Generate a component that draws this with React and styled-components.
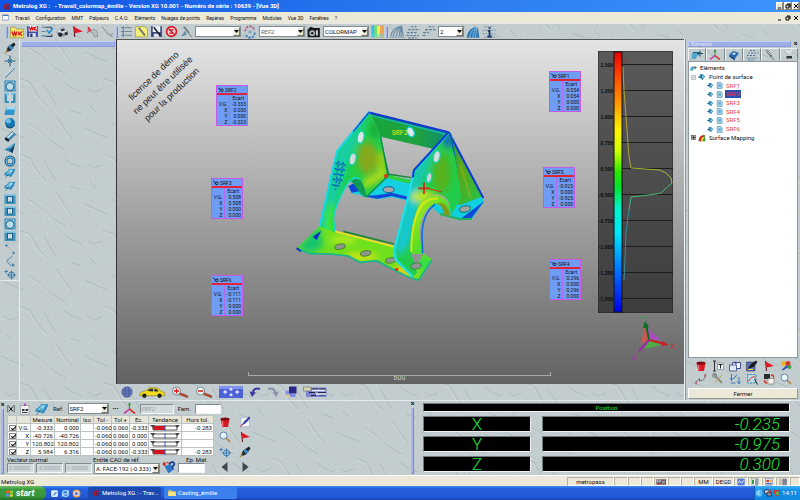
import styled, { createGlobalStyle } from 'styled-components';

const GlobalStyle = createGlobalStyle`
  * {
    box-sizing: border-box;
  }
  body {
    margin: 0;
    background: #c0cacc;
    color: #111;
    font-family: 'Roboto', sans-serif;
    font-size: 6px;
    line-height: 8px;
  }
  button, input, select {
    font: inherit;
    color: inherit;
    margin: 0;
    padding: 0;
  }
`;

/* ---------- icons ---------- */

const glyphs = {
  app: (
    <>
      <path d='M20 5 Q10 1 6 9 Q3 17 10 22 L13 17 Q9 12 14 9 L20 10Z' fill='#b5121f' />
      <path d='M12 12 L21 12 L19 20 L13 20Z' fill='#7a1d38' />
    </>
  ),
  doc: (
    <>
      <rect x='1' y='3' width='22' height='18' rx='2' fill='#fff' stroke='#3b66c8' strokeWidth='2' />
      <path d='M2 5H22' stroke='#3b66c8' strokeWidth='3' />
    </>
  ),
  wkOpen: (
    <>
      <path d='M1 4H9L11 7H23V22H1Z' fill='#f5e56b' stroke='#9b8a20' />
      <path d='M3 11L6 18L8 12L10 18L12 11M15 11V18M21 11L16 15L21 18' fill='none' stroke='#e01010' strokeWidth='2' />
    </>
  ),
  wkSave: (
    <>
      <path d='M2 2H22V22H2Z' fill='#3b4ea8' />
      <rect x='5' y='1' width='15' height='11' fill='#fff' />
      <path d='M6 3L8 10L10 4L12 10L13 3M15 3V10M19 3L15 7L20 10' fill='none' stroke='#e01010' strokeWidth='2' />
      <rect x='6' y='15' width='12' height='7' fill='#dfe4f4' />
      <rect x='8' y='16' width='4' height='6' fill='#20285c' />
    </>
  ),
  tasks: (
    <>
      <path d='M1 4H9M1 12H9M1 20H9' stroke='#5a84a8' strokeWidth='2' />
      <path d='M9 4H19V8M20 17V21H9' fill='none' stroke='#344a66' strokeWidth='2' />
      <path d='M11 9L15 15L22 6' fill='none' stroke='#2a8ccb' strokeWidth='3' />
    </>
  ),
  machine: (
    <>
      <path d='M2 12L12 3L22 11L15 20L3 17Z' fill='#dfe5ea' stroke='#7b8790' />
      <path d='M2 12L12 15L22 11V16L14 21L3 18Z' fill='#8796a6' />
      <circle cx='8' cy='18' r='4' fill='#23282e' />
      <circle cx='19' cy='16' r='3' fill='#333' />
      <path d='M8 8L14 6L17 10L10 12Z' fill='#343b47' />
    </>
  ),
  flag: (
    <>
      <path d='M5 2L7 22' stroke='#5a1018' strokeWidth='2' />
      <path d='M5 3L22 12L7 15Z' fill='#e31826' />
    </>
  ),
  spray: (
    <>
      <path d='M4 4L9 12' stroke='#e02020' strokeWidth='3' />
      <path d='M8 12Q14 5 20 11L22 21L16 22L13 16Z' fill='#b9bec3' stroke='#6d747a' />
      <path d='M2 14L6 11M3 9L8 8' stroke='#c34' strokeWidth='2' />
    </>
  ),
  probe: (
    <>
      <path d='M3 2L15 17' stroke='#7d8790' strokeWidth='4' />
      <path d='M4 2L15 16' stroke='#dfe5e8' strokeWidth='2' />
      <path d='M15 17L22 22M17 22L22 15' stroke='#666' strokeWidth='1' />
    </>
  ),
  list: (
    <>
      <path d='M8 5H22M8 12H22M8 19H22' stroke='#75848c' strokeWidth='2' />
      <path d='M2 5H5M2 12H5M2 19H5M6 2V22' stroke='#4d80b0' strokeWidth='2' />
    </>
  ),
  note: (
    <>
      <path d='M1 3H19L23 8V22H1Z' fill='#f4ec7c' stroke='#8c8434' />
      <path d='M7 5L18 19' stroke='#2d3138' strokeWidth='3' />
      <path d='M7 5L17 18' stroke='#fff' strokeWidth='1' />
    </>
  ),
  saveNote: (
    <>
      <path d='M2 2H22V22H2Z' fill='#39487c' />
      <path d='M5 2H19V13H5Z' fill='#eef1f8' />
      <rect x='7' y='16' width='10' height='6' fill='#dfe4f4' />
      <path d='M7 4L19 20' stroke='#20242a' strokeWidth='3' />
    </>
  ),
  forbid: (
    <>
      <circle cx='12' cy='12' r='9' fill='#ecd0d2' stroke='#d81220' strokeWidth='3' />
      <path d='M6 6L18 18M8 9H16M8 15H16' stroke='#c4111d' strokeWidth='2' />
    </>
  ),
  pick: (
    <>
      <path d='M7 3L17 15' stroke='#7b858d' strokeWidth='4' />
      <path d='M2 21L10 10L12 18Z' fill='#5d8cab' />
      <path d='M16 16L22 22' stroke='#333' />
    </>
  ),
  rotate: (
    <>
      <path d='M4 11A8 8 0 0 1 17 4L20 9' fill='none' stroke='#b8557a' strokeWidth='3' strokeDasharray='4 2' />
      <path d='M20 13A8 8 0 0 1 7 20L4 15' fill='none' stroke='#377abb' strokeWidth='3' strokeDasharray='4 2' />
      <circle cx='12' cy='12' r='3' fill='#7ea6c2' />
    </>
  ),
  camera: (
    <>
      <path d='M1 8L6 3L12 5L22 5V21H1Z' fill='#16181b' />
      <circle cx='9' cy='14' r='5' fill='#aeb6bc' />
      <circle cx='9' cy='14' r='2' fill='#111' />
      <path d='M17 9V18' stroke='#e5e8ea' strokeWidth='3' />
    </>
  ),
  spectrum: (
    <>
      <rect x='1' y='1' width='6' height='22' fill='#38b8ec' />
      <rect x='6' y='1' width='6' height='22' fill='#6fe06b' />
      <rect x='11' y='1' width='6' height='22' fill='#f4ee56' />
      <rect x='17' y='1' width='6' height='22' fill='#f4a04c' />
      <path d='M1 16H23V23H1Z' fill='#5ee0d0' opacity='0.5' />
      <rect x='1' y='1' width='22' height='22' fill='none' stroke='#9fb2b8' />
    </>
  ),
  fan: (
    <path
      d='M1 22Q2 5 20 2L23 22M5 22Q6 9 20 2M10 22Q12 9 20 2M15 22Q16 10 20 2M19 22V3'
      fill='none'
      stroke='#6b8da5'
      strokeWidth='2'
    />
  ),
  fanBlue: (
    <>
      <path d='M1 22Q2 5 20 2L23 22Z' fill='#2f78b4' />
      <path d='M6 22Q7 9 20 2M11 22Q13 9 20 2M16 22Q17 10 20 2' fill='none' stroke='#b9dcf1' strokeWidth='1' />
    </>
  ),
  cloud: (
    <path
      d='M8 3H20M4 8H23M2 13H20M1 18H22M4 22H18'
      stroke='#577a94'
      strokeWidth='2'
      strokeDasharray='4 2'
    />
  ),
  cloudHalf: <path d='M11 3H21M5 8H23M2 13H12M1 18H7' stroke='#577a94' strokeWidth='2' strokeDasharray='5 2' />,
  cloudInfo: (
    <>
      <path d='M4 3H20M1 9H23M1 15H23M4 21H22' stroke='#6f8ca0' strokeWidth='2' strokeDasharray='3 2' />
      <path d='M13 4V7M10 10H13V20M9 20H17' stroke='#16356e' strokeWidth='3' fill='none' />
    </>
  ),
  pen: (
    <>
      <path d='M3 21L8 9L20 1L23 5L14 17Z' fill='#1d2328' />
      <path d='M8 9L14 16L20 12L13 6Z' fill='#3b8bc4' />
      <path d='M2 23L8 15' stroke='#c98a2c' strokeWidth='2' />
    </>
  ),
  point: (
    <>
      <path d='M12 1V23M1 12H23' stroke='#25587a' strokeWidth='2' />
      <path d='M8 8L16 16M16 8L8 16' stroke='#1e6ea0' strokeWidth='2' />
    </>
  ),
  line: <path d='M2 22L22 2' stroke='#3a83ad' strokeWidth='2' />,
  circle: (
    <>
      <rect x='1' y='1' width='22' height='22' fill='#2f83b4' />
      <rect x='3' y='3' width='18' height='18' fill='#8cc8e4' />
      <circle cx='12' cy='13' r='8' fill='#bcdce6' stroke='#1b5d86' strokeWidth='2' />
    </>
  ),
  slot: (
    <>
      <path d='M1 2H23V22H1Z' fill='#3b8fbc' />
      <path d='M1 2H23L18 7H6Z' fill='#7fc2de' />
      <path d='M6 6H18V18H6Z' fill='#c3d3d8' />
      <path d='M10 1H14V6H10ZM10 18H14V23H10Z' fill='#c3d3d8' />
    </>
  ),
  door: (
    <>
      <rect x='1' y='2' width='22' height='20' fill='#3f94bf' />
      <rect x='1' y='2' width='22' height='4' fill='#86c6e0' />
      <path d='M7 6Q12 9 17 6V19Q12 16 7 19Z' fill='#cfe0e5' stroke='#1d5f85' strokeWidth='2' />
    </>
  ),
  plane: (
    <>
      <path d='M4 4H23L20 20H1Z' fill='#2f95cc' />
      <path d='M5 4H23L22 9H4Z' fill='#a4dcf3' />
    </>
  ),
  sphere: (
    <>
      <circle cx='12' cy='12' r='10' fill='#1577b3' />
      <circle cx='9' cy='8' r='5' fill='#66bfe9' />
      <path d='M4 18A10 10 0 0 0 21 16' stroke='#0b3a5d' strokeWidth='2' fill='none' />
    </>
  ),
  cylinder: (
    <>
      <path d='M2 17L17 3L23 9L9 22Z' fill='#3a92c0' stroke='#1b3344' />
      <path d='M4 16L17 4L20 6L6 19Z' fill='#c8ecf8' />
      <ellipse cx='6' cy='19' rx='5' ry='3' transform='rotate(42 6 19)' fill='#15222c' />
    </>
  ),
  cone: (
    <>
      <path d='M1 15L22 2L17 22Z' fill='#2379a9' />
      <path d='M1 15L22 2L19 10Z' fill='#5cbbe4' />
      <path d='M22 2L17 22L12 18Z' fill='#123a55' />
    </>
  ),
  torus: (
    <>
      <circle cx='12' cy='12' r='8' fill='none' stroke='#17628e' strokeWidth='6' />
      <circle cx='12' cy='12' r='8' fill='none' stroke='#7cc7e6' strokeWidth='2' />
    </>
  ),
  surface: (
    <>
      <path d='M1 12Q8 10 11 3Q17 5 23 3Q20 14 14 20Q8 16 1 17Z' fill='#2f8fc3' />
      <path d='M4 13Q9 11 12 5L18 6Q15 12 11 15Z' fill='#93d6f0' />
      <path d='M3 22L12 10' stroke='#173a52' />
    </>
  ),
  surfPoint: (
    <>
      <path d='M5 5L14 3L22 11L13 20L4 15Z' fill='#4aa9cf' />
      <path d='M1 12H16M9 3L14 20' stroke='#1b5b80' strokeWidth='3' fill='none' />
      <path d='M12 9L18 12L12 15Z' fill='#cdf0fa' />
    </>
  ),
  tagMark: (
    <>
      <path d='M1 4L10 10L8 18' fill='none' stroke='#0c1430' strokeWidth='4' />
      <circle cx='16' cy='13' r='5' fill='#9fe0f4' stroke='#0c1430' strokeWidth='4' />
    </>
  ),
  pointsA: (
    <>
      <path d='M5 2V8M2 5H8M19 17V23M16 20H22' stroke='#4687ab' strokeWidth='2' />
      <path d='M8 8L17 18' stroke='#7b929f' strokeDasharray='3 2' />
    </>
  ),
  pointsB: (
    <>
      <path d='M17 2L5 12L14 22' fill='none' stroke='#4687ab' strokeWidth='2' />
      <circle cx='18' cy='20' r='3' fill='#4687ab' />
    </>
  ),
  target: (
    <>
      <circle cx='15' cy='14' r='6' fill='none' stroke='#3b7cae' strokeWidth='2' />
      <path d='M15 5V23M6 14H24M1 7H8M4 4V11' stroke='#3b7cae' strokeWidth='2' />
    </>
  ),
  globe: (
    <>
      <circle cx='12' cy='12' r='11' fill='#46569a' />
      <path d='M12 1V23M1 12H23M4 6H20M4 18H20M6 3Q2 12 6 21M18 3Q22 12 18 21' stroke='#8e9ed4' fill='none' />
    </>
  ),
  zoomIn: (
    <>
      <path d='M17 15L34 22' stroke='#a84a34' strokeWidth='5' />
      <circle cx='11' cy='10' r='8' fill='#eef5f5' stroke='#6d9188' strokeWidth='2' />
      <path d='M11 5V15M6 10H16' stroke='#e01822' strokeWidth='3' />
    </>
  ),
  zoomOut: (
    <>
      <path d='M17 15L34 22' stroke='#a84a34' strokeWidth='5' />
      <circle cx='11' cy='10' r='8' fill='#eef5f5' stroke='#6d9188' strokeWidth='2' />
      <path d='M6 10H16' stroke='#e01822' strokeWidth='3' />
    </>
  ),
  car: (
    <>
      <path d='M1 17Q2 10 12 9Q19 1 29 3Q38 3 40 9L47 12V18H1Z' fill='#f2dc1c' stroke='#7a6c10' />
      <path d='M15 9Q20 4 26 5V10ZM28 5Q35 5 36 10H28Z' fill='#31363a' />
      <circle cx='10' cy='18' r='4' fill='#1b1b1b' />
      <circle cx='38' cy='18' r='4' fill='#1b1b1b' />
    </>
  ),
  views: (
    <>
      <rect width='48' height='24' fill='#4c62d6' />
      <path d='M0 0H48V6H0Z' fill='#7f92ee' />
      <path d='M24 3L28 7L24 10L20 7ZM24 14L28 18L24 21L20 18ZM12 8L17 12L12 16L8 12ZM36 8L41 12L36 16L32 12Z' fill='#d7e0fb' />
    </>
  ),
  undo: (
    <>
      <path d='M22 6Q10 2 7 14' fill='none' stroke='#3c3ca0' strokeWidth='4' />
      <path d='M1 11L14 13L6 22Z' fill='#3c3ca0' />
    </>
  ),
  redo: (
    <>
      <path d='M2 6Q14 2 17 14' fill='none' stroke='#8b90ac' strokeWidth='4' />
      <path d='M23 11L11 13L19 22Z' fill='#8b90ac' />
    </>
  ),
  layers: (
    <>
      <rect x='1' y='9' width='10' height='8' fill='#8c94e6' />
      <rect x='8' y='1' width='15' height='14' fill='#2b2788' />
      <rect x='9' y='16' width='12' height='6' fill='#7f88e0' />
      <path d='M3 18H10V22H3Z' fill='#e4cf5a' />
    </>
  ),
  columns: (
    <>
      <rect x='6' y='3' width='41' height='19' fill='#7d86d0' />
      <path d='M1 2H16V10H1Z' fill='#d6d5b0' stroke='#555' />
      <path d='M18 6H30M32 6H45M12 13H24M30 13H46M16 19H26M32 18H45' stroke='#22243c' strokeWidth='2' />
      <path d='M18 9H44M26 16H46' stroke='#e9ecf6' strokeWidth='3' />
    </>
  ),
  bin: (
    <>
      <path d='M3 6H21L18 22H7Z' fill='#d81921' />
      <ellipse cx='12' cy='6' rx='9' ry='3' fill='#7e0a12' />
      <path d='M7 10L8 20' stroke='#f58288' strokeWidth='2' />
    </>
  ),
  rename: (
    <>
      <path d='M2 2H8M5 2V22M2 22H8' stroke='#333' strokeWidth='2' fill='none' />
      <rect x='11' y='6' width='12' height='13' fill='#f0f3f4' stroke='#667' />
      <path d='M13 9H21M17 9V17' stroke='#222' strokeWidth='2' />
    </>
  ),
  props: (
    <>
      <path d='M7 5H23V17H7Z' fill='#f4f6fa' stroke='#3d4e8c' strokeWidth='2' />
      <path d='M1 10H15V22H1Z' fill='#dfe6f5' stroke='#56639a' strokeWidth='2' />
      <path d='M10 3L18 5L13 9Z' fill='#3e4aa8' />
    </>
  ),
  edit: (
    <>
      <path d='M1 4H18V22H1Z' fill='#5b70c0' stroke='#222' />
      <path d='M3 18L9 9L20 1L23 4L15 14Z' fill='#1b1b1b' />
      <path d='M4 19H14' stroke='#e8dc62' strokeWidth='2' />
    </>
  ),
  sheet: (
    <>
      <path d='M4 4L19 2L22 21L3 22Z' fill='#f6f7fa' stroke='#8a93b0' />
      <path d='M4 20L10 11L20 1L23 4L14 14Z' fill='#39469a' />
      <path d='M3 22L7 16' stroke='#c03020' strokeWidth='2' />
    </>
  ),
  palette: (
    <>
      <circle cx='7' cy='7' r='5' fill='#e9b52d' />
      <circle cx='16' cy='7' r='5' fill='#d43b28' />
      <circle cx='19' cy='14' r='4' fill='#3aa348' />
      <path d='M2 21L13 10L17 14L8 20Z' fill='#4159b8' />
    </>
  ),
  curve: (
    <>
      <path d='M2 20Q6 9 12 15Q17 18 22 3' fill='none' stroke='#6f7b80' strokeWidth='2' />
      <path d='M2 17V23M9 11V17M20 2V8' stroke='#c33' strokeWidth='2' />
    </>
  ),
  tools: (
    <>
      <path d='M3 2L20 20' stroke='#8b8f80' strokeWidth='4' />
      <path d='M21 3L5 20' stroke='#c2a84a' strokeWidth='2' />
      <circle cx='5' cy='5' r='4' fill='none' stroke='#7c8388' strokeWidth='2' />
    </>
  ),
  arrows: (
    <path
      d='M5 2V14M2 10L5 15L8 10M16 3L9 12M20 8V21M16 17L20 22L23 17M3 20H13'
      fill='none'
      stroke='#3f7fb4'
      strokeWidth='2'
    />
  ),
  frame: (
    <>
      <rect x='3' y='3' width='17' height='17' fill='#b9dbe8' stroke='#3b86ac' strokeWidth='2' strokeDasharray='4 2' />
      <path d='M5 17Q12 4 19 9' stroke='#cf3a34' strokeWidth='2' fill='none' />
      <path d='M17 12L23 23' stroke='#222' strokeWidth='2' />
    </>
  ),
  swap: (
    <>
      <rect x='2' y='2' width='12' height='10' fill='#2a2a2a' />
      <rect x='10' y='11' width='12' height='11' fill='#f6f0ea' stroke='#555' />
      <path d='M16 4Q22 4 21 9M8 20Q3 20 3 14' stroke='#d23028' strokeWidth='3' fill='none' />
    </>
  ),
  crossed: (
    <>
      <path d='M2 2V22M22 2V22M2 2H7M17 2H22' stroke='#444' strokeWidth='2' />
      <path d='M6 5L18 19M18 5L6 19' stroke='#111' strokeWidth='3' />
    </>
  ),
  report: (
    <>
      <path d='M3 5H20V23H3Z' fill='#eef1f2' stroke='#777' />
      <path d='M6 12H11V16H6ZM13 12H18V16H13Z' fill='#333' />
      <path d='M6 19H17' stroke='#333' strokeWidth='2' />
      <path d='M12 1V6' stroke='#b04ac8' strokeWidth='4' />
    </>
  ),
  magnify: (
    <>
      <path d='M13 13L22 22' stroke='#b98c5c' strokeWidth='4' />
      <circle cx='9' cy='9' r='7' fill='#e9f5fb' stroke='#5f86b0' strokeWidth='2' />
    </>
  ),
  helpRef: (
    <>
      <path d='M4 9L14 5L21 14L11 21Z' fill='#2f78c8' />
      <path d='M13 6Q14 1 19 2Q24 5 18 9V13' fill='none' stroke='#143b8c' strokeWidth='3' />
      <circle cx='4' cy='5' r='3' fill='#d82020' />
      <path d='M8 2L12 4' stroke='#d82020' strokeWidth='2' />
    </>
  ),
  axes: (
    <>
      <path d='M12 13V2' stroke='#2f9a34' strokeWidth='2' />
      <path d='M12 13L22 21' stroke='#d5261f' strokeWidth='3' />
      <path d='M12 13L2 21' stroke='#c43aa0' strokeWidth='3' />
      <path d='M9 6L12 0L15 6Z' fill='#2f9a34' />
    </>
  ),
  elements: (
    <>
      <path d='M2 8H14L10 20H1Z' fill='#4fa8cc' />
      <path d='M4 7H17L14 13' fill='none' stroke='#1f6484' strokeWidth='2' />
      <path d='M18 3V15M12 9H24' stroke='#25485c' strokeWidth='2' />
    </>
  ),
  cube: (
    <>
      <path d='M2 12L10 4L22 8L14 19Z' fill='#2368ae' />
      <path d='M8 10L12 7L16 9L12 12Z' fill='#d5ecfa' />
      <path d='M2 12L14 19V23L3 16Z' fill='#123e70' />
    </>
  ),
  stylus: (
    <>
      <path d='M5 2L15 15' stroke='#3c4248' strokeWidth='4' />
      <path d='M5 2L14 13' stroke='#dfe5e8' strokeWidth='2' />
      <path d='M15 15L20 22' stroke='#222' />
    </>
  ),
  tips: (
    <>
      <path d='M8 2L12 8M17 2L13 8' stroke='#e8ecec' strokeWidth='3' />
      <rect x='7' y='14' width='11' height='5' fill='#30363b' />
    </>
  ),
  page: (
    <>
      <path d='M4 2H17L21 6V22H4Z' fill='#bfe3f2' stroke='#2c7fae' strokeWidth='2' />
      <path d='M8 8H17M8 12H17M8 16H17' stroke='#2c7fae' strokeWidth='2' />
    </>
  ),
  rainbow: (
    <>
      <path d='M2 22Q2 3 20 3L23 22Z' fill='#3f9c3a' />
      <path d='M2 22Q2 3 20 3L18 9Q9 9 9 22Z' fill='#d22b20' />
      <path d='M9 22Q9 9 18 9L18 14Q14 14 14 22Z' fill='#f0d12c' />
    </>
  ),
  expanded: <path d='M3 3H21V21H3ZM7 12H17' fill='none' stroke='#888' strokeWidth='3' />,
  collapsed: (
    <>
      <rect x='3' y='3' width='18' height='18' fill='#bbb' stroke='#444' strokeWidth='3' />
      <path d='M6 12H18M12 6V18' stroke='#111' strokeWidth='4' />
    </>
  ),
  leftArrow: <path d='M17 2V22L5 12Z' fill='#414a52' />,
  rightArrow: <path d='M7 2V22L19 12Z' fill='#414a52' />,
  ie: (
    <>
      <circle cx='12' cy='12' r='8' fill='none' stroke='#8ed0ff' strokeWidth='4' />
      <path d='M5 13H19M2 19Q14 14 22 3' stroke='#e8f5ff' strokeWidth='2' fill='none' />
    </>
  ),
  desktop: (
    <>
      <rect x='3' y='3' width='18' height='18' rx='3' fill='#d9ecff' />
      <path d='M8 16L16 7L18 10L11 17Z' fill='#3d78d8' />
    </>
  ),
  player: (
    <>
      <circle cx='12' cy='12' r='9' fill='#dcd6ee' stroke='#f0a030' strokeWidth='3' />
      <path d='M9 7L17 12L9 17Z' fill='#4a5ab0' />
    </>
  ),
  folder: (
    <>
      <path d='M1 4H9L12 7H23V21H1Z' fill='#f0cf52' />
      <path d='M1 10H23V21H1Z' fill='#fbe68a' />
    </>
  ),
  windows: (
    <>
      <path d='M3 5Q7 2 11 4V11Q7 9 2 12Z' fill='#ee5a24' />
      <path d='M13 4Q17 6 22 4L21 11Q17 13 13 11Z' fill='#8fd13c' />
      <path d='M2 14Q7 11 11 13V20Q7 18 1 21Z' fill='#4f9be8' />
      <path d='M13 13Q17 15 21 13L20 20Q17 22 13 20Z' fill='#f7cf30' />
    </>
  ),
  grid: (
    <>
      <rect x='1' y='2' width='22' height='20' fill='#fff' stroke='#566' />
      <path d='M3 5H9V19H3Z' fill='#2f9a50' />
      <path d='M12 6H21M12 12H21M12 18H21' stroke='#233a6c' strokeWidth='3' />
    </>
  ),
  wave: (
    <>
      <rect x='1' y='2' width='22' height='20' fill='#5675dc' />
      <path d='M3 16L8 8L14 16L20 7' stroke='#e4eafc' strokeWidth='3' fill='none' />
    </>
  ),
  chart: (
    <>
      <rect x='1' y='2' width='22' height='20' fill='#d8ddf3' stroke='#556' />
      <path d='M4 6H12V12H4Z' fill='#cf4030' />
      <path d='M14 6H21V12H14Z' fill='#e4ba3a' />
      <path d='M4 15H20V19H4Z' fill='#4e63b4' />
    </>
  ),
  book: (
    <>
      <rect x='1' y='3' width='10' height='18' fill='#f3f4ee' stroke='#555' />
      <rect x='12' y='3' width='11' height='18' fill='#8993b8' stroke='#445' />
      <path d='M3 8H9M3 12H9M3 16H9M14 8H21M14 13H21' stroke='#333' />
    </>
  ),
  joystick: (
    <>
      <rect x='1' y='4' width='30' height='16' fill='#5c5560' />
      <path d='M4 7H14V12H4ZM18 8L27 16M27 8L18 16' stroke='#e7dada' strokeWidth='2' fill='none' />
      <path d='M5 17H13' stroke='#d23' strokeWidth='3' />
    </>
  ),
  chevron: (
    <>
      <circle cx='12' cy='12' r='11' fill='#54b4f4' />
      <path d='M14 6L8 12L14 18' fill='none' stroke='#fff' strokeWidth='3' />
    </>
  ),
  network: (
    <>
      <rect x='2' y='3' width='13' height='10' fill='#c3cbd8' stroke='#223' strokeWidth='2' />
      <rect x='9' y='11' width='13' height='10' fill='#7f8ca6' stroke='#223' strokeWidth='2' />
      <path d='M14 2L23 11M23 2L14 11' stroke='#e22' strokeWidth='3' />
    </>
  ),
  shield: (
    <>
      <path d='M3 3H21V13Q18 21 12 23Q6 21 3 13Z' fill='#c93a32' />
      <path d='M8 8H18V18H8Z' fill='#5fae58' />
    </>
  ),
};

const Svg = styled.svg`
  display: block;
  flex: none;
`;

const Glyph = ({ name, size = 12, wide = 24 }) => (
  <Svg width={(size * wide) / 24} height={size} viewBox={`0 0 ${wide} 24`} aria-hidden='true'>
    {glyphs[name]}
  </Svg>
);

const IconButton = styled.button`
  display: flex;
  align-items: center;
  justify-content: center;
  flex: none;
  border: 0;
  background: none;
`;

const Tool = ({ name, label = name, size, wide }) => (
  <IconButton type='button' aria-label={label}>
    <Glyph name={name} size={size} wide={wide} />
  </IconButton>
);

/* ---------- shared parts ---------- */

const ComboFrame = styled.span`
  display: flex;
  flex: none;
  width: ${(p) => p.$width}px;
  height: 11px;
  border: 1px solid #7e8a8e;
  background: #fff;
  select {
    flex: 1;
    min-width: 0;
    appearance: none;
    border: 0;
    background: none;
    padding-left: 1px;
    line-height: 9px;
    font-style: ${(p) => (p.$italic ? 'italic' : 'normal')};
    color: ${(p) => (p.$italic ? '#666' : '#111')};
  }
`;

const ComboArrow = styled.span`
  display: flex;
  align-items: center;
  justify-content: center;
  width: 7px;
  background: #ece9d8;
  border: 1px solid;
  border-color: #fff #77746a #77746a #fff;
`;

const Combo = ({ label, value, width, italic }) => (
  <ComboFrame $width={width} $italic={italic}>
    <select aria-label={label} defaultValue={value}>
      <option value={value}>{value}</option>
    </select>
    <ComboArrow>
      <Svg width='5' height='3' viewBox='0 0 5 3'>
        <path d='M0 0H5L2.5 3Z' fill='#000' />
      </Svg>
    </ComboArrow>
  </ComboFrame>
);

const Field = styled.input`
  flex: none;
  width: ${(p) => p.$width}px;
  height: 10px;
  border: 1px solid;
  border-color: #7e8a8e #f4f6f6 #f4f6f6 #7e8a8e;
  background: ${(p) => (p.disabled ? '#d3dadb' : '#fff')};
  color: ${(p) => (p.disabled ? '#98a2a5' : '#111')};
  font-size: ${(p) => (p.$small ? 5 : 6)}px;
  font-style: ${(p) => (p.$italic ? 'italic' : 'normal')};
  padding-left: 1px;
`;

const Grip = styled.span`
  flex: none;
  width: ${(p) => (p.$tall ? '3px' : '2px')};
  height: ${(p) => (p.$tall ? 'auto' : '12px')};
  background: #a9b9ee;
  border: 1px solid;
  border-color: #d3dcf8 #7186d4 #7186d4 #a9b9ee;
`;

/* ---------- stone background ---------- */

const StoneSvg = styled.svg`
  position: absolute;
  inset: 0;
  width: 100%;
  height: 100%;
  z-index: -1;
`;

const Stone = () => (
  <StoneSvg aria-hidden='true'>
    <defs>
      <filter id='grain' x='0' y='0' width='100%' height='100%'>
        <feTurbulence type='fractalNoise' baseFrequency='0.6' numOctaves='2' seed='4' />
        <feColorMatrix values='0 0 0 0 0.4  0 0 0 0 0.47  0 0 0 0 0.5  0.9 0 0 0 -0.32' />
      </filter>
      <pattern id='veins' width='84' height='76' patternUnits='userSpaceOnUse'>
        <rect width='84' height='76' fill='#c5cfd1' />
        <g fill='none' stroke='#a3afb1' strokeWidth='1' opacity='0.6'>
          <path d='M19 2L30 6L38 20L47 30' />
          <path d='M56 40L62 49L68 58L72 63' />
          <path d='M1 52L14 58L24 62' />
          <path d='M44 8L52 22L56 29' />
          <path d='M28 47L40 55L52 66L66 74' />
          <path d='M64 6L72 12L82 16' />
          <path d='M4 12L10 16L18 13' />
          <path d='M70 34L82 38' />
          <path d='M6 30L12 36' />
        </g>
        <g fill='none' stroke='#d8e0e1' strokeWidth='1' opacity='0.5'>
          <path d='M20 4L29 8L37 22L46 32' />
          <path d='M55 42L61 51L70 63' />
          <path d='M30 50L42 58L54 69' />
        </g>
      </pattern>
    </defs>
    <rect width='100%' height='100%' fill='url(#veins)' />
    <rect width='100%' height='100%' filter='url(#grain)' opacity='0.6' />
  </StoneSvg>
);

/* ---------- top bars ---------- */

const Page = styled.div`
  position: relative;
  z-index: 0;
  display: flex;
  flex-direction: column;
  min-height: 100vh;
  overflow: hidden;
`;

const TitleBar = styled.header`
  display: flex;
  align-items: center;
  height: 12px;
  padding: 0 1px 0 2px;
  gap: 2px;
  background: linear-gradient(90deg, #0e55e2, #2f7ef2 60%, #3b94ff);
  h1 {
    flex: 1;
    margin: 0;
    color: #fff;
    font-size: 6px;
    font-weight: 700;
    white-space: pre;
  }
`;

const ButtonGroup = styled.div`
  display: flex;
  gap: 1px;
`;

const WinButton = styled.button`
  display: flex;
  align-items: center;
  justify-content: center;
  width: 7px;
  height: 8px;
  border: 1px solid;
  border-color: #fff #88857a #88857a #fff;
  background: #ece9d8;
`;

const WinButtons = () => (
  <ButtonGroup>
    {[
      ['Réduire', 'M1 5H4'],
      ['Restaurer', 'M2 1H5V4M1 2H4V5H1Z'],
      ['Fermer la fenêtre', 'M1 1L5 5M5 1L1 5'],
    ].map(([label, d]) => (
      <WinButton key={label} type='button' aria-label={label}>
        <Svg width='6' height='6' viewBox='0 0 6 6'>
          <path d={d} fill='none' stroke='#000' />
        </Svg>
      </WinButton>
    ))}
  </ButtonGroup>
);

const MenuBar = styled.nav`
  display: flex;
  align-items: center;
  gap: 6px;
  height: 11px;
  padding: 0 1px 0 2px;
  background: #ece9d8;
  font-size: 5px;
  button {
    border: 0;
    background: none;
    white-space: nowrap;
  }
  & > :last-child {
    margin-left: auto;
  }
`;

const ToolBar = styled.div`
  display: flex;
  align-items: center;
  gap: 2px;
  height: 16px;
  padding: 0 6px;
  border-top: 1px solid #e4e9ea;
`;

const menus = [
  'Travail', 'Configuration', 'MMT', 'Palpeurs', 'C.A.O.', 'Eléments', 'Nuages de points',
  'Repères', 'Programme', 'Modules', 'Vue 3D', 'Fenêtres', '?',
];

const TopBars = () => (
  <>
    <TitleBar>
      <Glyph name='app' size={9} />
      <h1>{'Metrolog XG :   - Travail_colormap_émilie - Version XG 10.001 - Numéro de série : 10639 - [Vue 3D]'}</h1>
      <WinButtons />
    </TitleBar>
    <MenuBar>
      <Glyph name='doc' size={7} />
      {menus.map((m) => (
        <button key={m} type='button'>{m}</button>
      ))}
      <WinButtons />
    </MenuBar>
    <ToolBar>
      <Grip />
      <Tool name='wkOpen' size={14} />
      <Tool name='wkSave' size={13} />
      {['tasks', 'machine', 'flag', 'spray', 'probe'].map((n) => (
        <Tool key={n} name={n} size={13} />
      ))}
      <Grip />
      {['list', 'note', 'saveNote', 'forbid', 'pick'].map((n) => (
        <Tool key={n} name={n} size={13} />
      ))}
      <Combo label='Gamme' value='' width={46} />
      <Tool name='rotate' size={14} />
      <Combo label='Repère' value='REF2' width={46} italic />
      <Tool name='camera' size={14} />
      <Combo label='Vue' value='COLORMAP' width={46} />
      <Tool name='spectrum' size={13} />
      <Grip />
      {['fan', 'cloud', 'cloudHalf'].map((n) => (
        <Tool key={n} name={n} size={14} />
      ))}
      <Combo label='Densité' value='2' width={26} />
      <Tool name='fanBlue' size={14} />
      <Tool name='cloudInfo' size={14} />
    </ToolBar>
  </>
);

/* ---------- left side ---------- */

const Workspace = styled.main`
  display: flex;
  flex: 1;
`;

const SideTools = styled.div`
  width: 20px;
  padding-top: 3px;
  border-right: 1px solid #e8eded;
`;

const SideStack = styled.div`
  display: flex;
  flex-direction: column;
  align-items: center;
  justify-content: space-between;
  height: 239px;
  border-bottom: 1px solid #e8eded;
`;

const LeftDock = styled.aside`
  width: 96px;
  padding: 1px 1px 0;
`;

const DockTitle = styled.div`
  display: flex;
  align-items: center;
  height: 7px;
  gap: 2px;
  color: #dfe6fb;
`;

const DockStripe = styled.span`
  flex: 1;
  height: 6px;
  line-height: 5px;
  font-size: 5px;
  padding-left: 2px;
  border: 1px solid;
  border-color: #c3cffa #8b9cd8 #8b9cd8 #c3cffa;
  background: #9dafe6;
`;

const sideIcons = [
  'pen', 'point', 'line', 'circle', 'slot', 'plane', 'sphere', 'cylinder', 'cone', 'torus',
  'surface', 'surface', 'door', 'door', 'circle', 'door', 'pointsA', 'pointsB', 'target',
];

/* ---------- 3D view ---------- */

const Center = styled.section`
  display: flex;
  flex: 1;
  flex-direction: column;
  min-width: 0;
`;

const View = styled.div`
  position: relative;
  flex: 1;
  border-top: 1px solid #555;
  border-left: 1px solid #333;
  background: linear-gradient(#e4e4e4, #626262);
`;

const Notice = styled.p`
  position: absolute;
  left: 4px;
  top: 26px;
  width: 84px;
  margin: 0;
  color: #222;
  font-family: 'Liberation Sans', sans-serif;
  font-size: 9px;
  line-height: 13px;
  text-align: center;
  white-space: nowrap;
  transform: rotate(-44deg);
`;

const Tag = styled.div`
  position: absolute;
  left: ${(p) => p.$x}px;
  top: ${(p) => p.$y}px;
  width: 32px;
  border: 1px solid #c25ae6;
  background: #6f9cf4;
  font-size: 5px;
  line-height: 6px;
  table {
    width: 100%;
    border-collapse: collapse;
    border-top: 2px solid #e0233a;
  }
  th, td {
    padding: 0 1px;
    height: 6px;
    font-weight: 400;
    text-align: right;
  }
  tbody th, thead td {
    width: 12px;
    border-right: 1px solid #b46aec;
  }
  thead th {
    text-align: center;
  }
`;

const TagName = styled.div`
  display: flex;
  align-items: center;
  gap: 1px;
  height: 7px;
  padding-left: 1px;
`;

const tags = [
  { name: 'SRF2', x: 99, y: 45, v: ['-0.333', '0.000', '0.000', '-0.333'] },
  { name: 'SRF3', x: 94, y: 138, v: ['0.508', '0.508', '0.000', '0.000'] },
  { name: 'SRF6', x: 94, y: 235, v: ['-0.111', '-0.111', '0.000', '0.000'] },
  { name: 'SRF1', x: 432, y: 31, v: ['0.054', '0.054', '0.000', '0.000'] },
  { name: 'SRF5', x: 426, y: 127, v: ['-0.925', '0.000', '-0.925', '0.000'] },
  { name: 'SRF4', x: 432, y: 219, v: ['0.296', '0.000', '0.296', '0.000'] },
];

const Deviation = ({ tag }) => (
  <Tag $x={tag.x} $y={tag.y}>
    <TagName>
      <Glyph name='tagMark' size={6} />
      {tag.name}
    </TagName>
    <table>
      <thead>
        <tr>
          <td />
          <th>Ecart</th>
        </tr>
      </thead>
      <tbody>
        {['V.G.', 'X', 'Y', 'Z'].map((axis, i) => (
          <tr key={axis}>
            <th>{axis}</th>
            <td>{tag.v[i]}</td>
          </tr>
        ))}
      </tbody>
    </table>
  </Tag>
);

const PartSvg = styled.svg`
  position: absolute;
  left: 163px;
  top: 50px;
  width: 220px;
  height: 200px;
`;

const leftPlate =
  'M268 66L172 183L158 240L120 408L106 482L118 484L166 425L160 385Q168 335 205 278Q225 255 240 268Q256 290 258 322L324 258L302 140Z';
const basePlate =
  'M50 474L118 408L160 425L340 470L352 498L400 548L430 490L456 508L418 570L385 560L345 540L315 525L290 511L240 516L205 496L150 491L90 490Z';
const frontPlate =
  'M505 128L402 240L385 320L342 480L348 512L398 562L412 548L395 492Q388 400 420 340Q450 300 490 318Q512 330 512 378L545 322L525 200Z';

const Part = () => (
  <PartSvg viewBox='0 0 660 600' aria-label='Pièce mesurée'>
    <defs>
      <filter id='soft' x='-30%' y='-30%' width='160%' height='160%'>
        <feGaussianBlur stdDeviation='9' />
      </filter>
      <clipPath id='clipLeft'><path d={leftPlate} /></clipPath>
      <clipPath id='clipBase'><path d={basePlate} /></clipPath>
      <clipPath id='clipFront'><path d={frontPlate} /></clipPath>
      <linearGradient id='band' x1='0' x2='1'>
        <stop offset='0' stopColor='#16a53c' />
        <stop offset='0.6' stopColor='#1fa23e' />
        <stop offset='1' stopColor='#0f8c72' />
      </linearGradient>
      <linearGradient id='gusset' x1='0' x2='1' y2='1'>
        <stop offset='0' stopColor='#0c9f6a' />
        <stop offset='0.5' stopColor='#5aa81c' />
        <stop offset='1' stopColor='#22c24a' />
      </linearGradient>
      <linearGradient id='ring' x1='0' x2='1' y2='1'>
        <stop offset='0' stopColor='#c4e81c' />
        <stop offset='0.5' stopColor='#5ce022' />
        <stop offset='1' stopColor='#18c8a0' />
      </linearGradient>
    </defs>

    {/* rear foot */}
    <path d='M205 290L240 268L326 256L404 272L385 332L335 322L292 328L215 310Z' fill='#16cfe0' />
    <path d='M325 254L404 274L402 284L320 264Z' fill='#2fd23c' />
    <path d='M205 288L226 278L238 304L215 308ZM245 318L292 326L335 318L385 330L384 320L335 308L290 316Z' fill='#1046d8' />
    <path d='M208 270Q228 254 245 272Q258 292 258 322L240 310Q226 284 208 270Z' fill='#0d9c50' />
    <ellipse cx='326' cy='299' rx='17' ry='9' fill='#a7a7a7' stroke='#0a5aa8' strokeWidth='3' />
    <path d='M320 252L390 262L400 270' fill='none' stroke='#0d8838' strokeWidth='4' />

    {/* top band */}
    <path d='M268 66L506 126L474 180L302 140Z' fill='url(#band)' />
    <path d='M302 140L328 252L322 262L292 140Z' fill='#0b8f5a' />
    <path d='M268 68L506 127' stroke='#0f3ccf' strokeWidth='7' />
    <path d='M272 76L496 132' stroke='#18b9ae' strokeWidth='4' />
    <ellipse cx='392' cy='126' rx='10' ry='15' transform='rotate(-25 392 126)' fill='#dfe9ea' stroke='#14cfd4' strokeWidth='4' />
    <text x='335' y='134' fontSize='20' fontFamily='Liberation Mono, monospace' fill='#f0ef20'>SRF2</text>

    {/* right gusset and foot */}
    <path d='M450 330L492 352L520 345L606 320L612 336L575 388L540 390L480 374L455 350Z' fill='#12cfe0' />
    <path d='M540 388L612 334L572 388Z' fill='#1048d8' />
    <path d='M480 372L540 388L575 386' fill='none' stroke='#1fb45a' strokeWidth='6' />
    <path d='M506 126L606 320L540 345L515 330L490 180Z' fill='url(#gusset)' />
    <path d='M520 180L534 330M540 220L572 325' stroke='#8fb41a' strokeWidth='6' opacity='0.6' />
    <path d='M506 126L610 324' stroke='#0b39d0' strokeWidth='6' />
    <path d='M512 132L524 200L540 325' fill='none' stroke='#0f9a6c' strokeWidth='5' />
    <path d='M510 130L524 200' fill='none' stroke='#0f57c0' strokeWidth='5' />
    <ellipse cx='555' cy='357' rx='17' ry='9' transform='rotate(-12 555 357)' fill='#a2a2a2' stroke='#0d7f68' strokeWidth='3' />

    {/* left plate */}
    <g clipPath='url(#clipLeft)'>
      <path d={leftPlate} fill='#1fcf48' />
      <g filter='url(#soft)'>
        <path d='M268 66L172 183L120 408L106 484L128 480L200 230Z' fill='#12cfa8' />
        <ellipse cx='262' cy='205' rx='30' ry='50' fill='#86a81c' />
        <ellipse cx='305' cy='220' rx='14' ry='40' fill='#9ccf18' />
        <path d='M250 300L325 255L318 235L250 270Z' fill='#b9dc14' />
        <ellipse cx='150' cy='400' rx='14' ry='60' fill='#3fe62c' />
        <ellipse cx='285' cy='120' rx='18' ry='30' fill='#18b03a' />
      </g>
      <path d='M96 450L122 420L112 455Z' fill='#0b2ec4' />
    </g>
    <path d='M268 66L172 183L158 240L120 408' fill='none' stroke='#18d6e2' strokeWidth='7' />
    <path d='M268 66L220 125' stroke='#0f4fd8' strokeWidth='4' />
    <path d='M166 425L160 385Q168 335 205 278Q225 255 240 268' fill='none' stroke='#17d8c8' strokeWidth='5' />
    <path d='M302 140L324 258L258 322' fill='none' stroke='#0c8c4c' strokeWidth='4' />
    <path d='M166 220L200 226M163 236L198 240M160 252L194 256M158 268L188 272M156 284L180 288M176 212L166 300M190 216L176 290' stroke='#0f6fb8' strokeWidth='5' strokeDasharray='8 4' />
    <ellipse cx='242' cy='142' rx='10' ry='18' transform='rotate(12 242 142)' fill='#d9e4e4' stroke='#18d2b0' strokeWidth='4' />
    <ellipse cx='218' cy='207' rx='10' ry='18' transform='rotate(12 218 207)' fill='#d0dcdc' stroke='#18d2b0' strokeWidth='4' />
    <circle cx='318' cy='258' r='6' fill='#e0301c' />

    {/* front foot */}
    <g clipPath='url(#clipBase)'>
      <path d={basePlate} fill='#6fe01e' />
      <g filter='url(#soft)'>
        <path d='M50 474L118 408L130 470L90 492Z' fill='#14c470' />
        <ellipse cx='245' cy='500' rx='50' ry='12' fill='#d6e418' />
        <ellipse cx='370' cy='545' rx='34' ry='18' fill='#e8cf18' />
        <ellipse cx='190' cy='450' rx='40' ry='12' fill='#b8e81c' />
        <ellipse cx='430' cy='520' rx='26' ry='20' fill='#30dc48' />
      </g>
      <path d='M98 440L124 422L110 450Z' fill='#0b2ec4' />
    </g>
    <path d='M165 424L342 470' stroke='#f0e41c' strokeWidth='5' />
    <path d='M190 424L342 462' stroke='#1b8a30' strokeWidth='5' />
    <path d='M50 476L90 491L150 492L205 498L240 517L290 512L345 541L385 561L416 570L454 512' fill='none' stroke='#12b88c' strokeWidth='5' />
    <path d='M50 474L62 484' stroke='#0b2ec4' strokeWidth='6' />
    {[[180, 470], [257, 490], [332, 511]].map(([cx, cy]) => (
      <ellipse key={cx} cx={cx} cy={cy} rx='16' ry='8' transform={`rotate(-10 ${cx} ${cy})`} fill='#8e9390' stroke='#4b8c28' strokeWidth='3' />
    ))}

    {/* front plate with its arch */}
    <g clipPath='url(#clipFront)'>
      <path d={frontPlate} fill='#22cc4a' />
      <g filter='url(#soft)'>
        <path d='M400 240L470 165L440 250L400 330L360 500L340 480Z' fill='#18c8b4' />
        <path d='M400 260L420 330L385 470L350 500Z' fill='#14c8d8' />
        <ellipse cx='485' cy='250' rx='26' ry='60' fill='#56b21e' />
        <ellipse cx='430' cy='320' rx='40' ry='16' fill='#c8e81c' />
        <ellipse cx='505' cy='150' rx='14' ry='24' fill='#1460c8' />
      </g>
    </g>
    <path d='M395 492Q388 400 420 340Q445 306 484 320Q512 334 512 378L492 372Q488 340 470 342Q430 350 420 410Q416 450 430 492Z' fill='url(#ring)' />
    <path d='M470 340Q500 330 512 378L492 374Q488 346 470 340Z' fill='#7d9c1c' />
    <path d='M394 486Q392 400 424 348Q444 322 474 326' fill='none' stroke='#e4e81a' strokeWidth='6' opacity='0.8' />
    <path d='M428 490L426 440Q426 370 466 342' fill='none' stroke='#0f6fe0' strokeWidth='5' />
    <path d='M505 130L402 242L385 320L342 482L348 510L398 560' fill='none' stroke='#1de0ee' strokeWidth='7' />
    <path d='M505 128L402 240L398 262' fill='none' stroke='#0b39d0' strokeWidth='6' />
    <ellipse cx='470' cy='200' rx='10' ry='18' transform='rotate(12 470 200)' fill='#d3dede' stroke='#18d2b0' strokeWidth='4' />
    <ellipse cx='447' cy='263' rx='8' ry='15' transform='rotate(12 447 263)' fill='#c8d4d4' stroke='#18d2b0' strokeWidth='4' />
    <ellipse cx='408' cy='528' rx='16' ry='9' transform='rotate(-10 408 528)' fill='#8e9390' stroke='#2b8c48' strokeWidth='3' />
    <circle cx='350' cy='538' r='5' fill='#e0301c' />
    <path d='M432 278V312M415 295H450' stroke='#e0221c' strokeWidth='5' />
    <path d='M450 297L486 306' stroke='#e0221c' strokeWidth='3' />
  </PartSvg>
);

const ScaleSvg = styled.svg`
  position: absolute;
  right: 11px;
  top: 11px;
  width: 75px;
  height: 262px;
`;

const ticks = ['1.500', '1.250', '1.000', '0.750', '0.500', '-0.500', '-0.750', '-1.000', '-1.250', '-1.500'];

const Scale = () => (
  <ScaleSvg viewBox='0 0 75 262' aria-label='Échelle des écarts'>
    <defs>
      <linearGradient id='heat' x2='0' y2='1'>
        <stop offset='0' stopColor='#e80000' />
        <stop offset='0.08' stopColor='#ff3c00' />
        <stop offset='0.2' stopColor='#ff9a00' />
        <stop offset='0.3' stopColor='#fff200' />
        <stop offset='0.38' stopColor='#d0ff00' />
        <stop offset='0.46' stopColor='#30e800' />
        <stop offset='0.52' stopColor='#00e430' />
        <stop offset='0.6' stopColor='#00f4c8' />
        <stop offset='0.7' stopColor='#00e8ff' />
        <stop offset='0.82' stopColor='#0080ff' />
        <stop offset='1' stopColor='#0000e8' />
      </linearGradient>
      <linearGradient id='slate' x2='0' y2='1'>
        <stop offset='0' stopColor='#5a5a5a' />
        <stop offset='1' stopColor='#3e3e3e' />
      </linearGradient>
    </defs>
    <rect width='75' height='262' fill='url(#slate)' stroke='#222' />
    {ticks.map((t, i) => (
      <g key={t}>
        <path d={`M24 ${13.5 + i * 26}H75`} stroke='#1c1c1c' />
        <text x='15' y={16 + i * 26} textAnchor='end' fontSize='5' fontWeight='700' fill='#0a0a0a' fontFamily='Liberation Sans, sans-serif'>
          {t}
        </text>
      </g>
    ))}
    <rect x='16' y='1' width='8' height='260' fill='url(#heat)' stroke='#111' />
    <path d='M25 13L29 8' stroke='#8e3030' fill='none' />
    <path d='M25 16L26 39L28 66L31 106L33 117' fill='none' stroke='#b0a23c' />
    <path d='M33 117L47 118L62 119L68 122L73 127L74 132' fill='none' stroke='#9cbc3c' />
    <path d='M74 132L68 137L63 142L58 143L42 145L33 146L31 159' fill='none' stroke='#4cb878' />
    <path d='M31 159L28 182L27 209L26 229' fill='none' stroke='#3a8c9c' />
  </ScaleSvg>
);

const TriadSvg = styled.svg`
  position: absolute;
  right: 3px;
  bottom: 20px;
  width: 54px;
  height: 50px;
`;

const Triad = () => (
  <TriadSvg viewBox='0 0 54 50' aria-hidden='true'>
    <path d='M22 26L18 12L14 30Z' fill='#c85850' />
    <path d='M22 26L20 14L34 26Z' fill='#a850b8' />
    <path d='M22 26L34 31L18 35Z' fill='#4cae44' />
    <path d='M22 26L19 10' stroke='#0d6b28' strokeWidth='2' />
    <path d='M16 14L18 7L22 13Z' fill='#0d6b28' />
    <path d='M22 26L38 30' stroke='#c42424' strokeWidth='2' />
    <path d='M35 27L42 31L35 32Z' fill='#c42424' />
    <path d='M22 26L12 37' stroke='#9c28a8' strokeWidth='2' />
    <g fontFamily='Liberation Sans, sans-serif' fontSize='8'>
      <text x='14' y='7' fill='#2eae3c'>Y</text>
      <text x='43' y='35' fill='#d42424'>X</text>
      <text x='5' y='46' fill='#b428b4'>Z</text>
    </g>
  </TriadSvg>
);

const Ruler = styled.div`
  position: absolute;
  left: 131px;
  right: 133px;
  bottom: 1px;
  height: 10px;
  color: #ccc;
  font-size: 7px;
  line-height: 10px;
  text-align: center;
  &::before {
    content: '';
    position: absolute;
    left: 0;
    right: 0;
    top: -1px;
    height: 3px;
    border: 1px solid #aaa;
    border-width: 0 1px 1px;
  }
`;

const ViewBar = styled.div`
  display: flex;
  align-items: center;
  gap: 6px;
  height: 16px;
  padding-left: 5px;
`;

/* ---------- right side ---------- */

const RightDock = styled.aside`
  display: flex;
  flex-direction: column;
  width: 116px;
  padding: 1px 2px 1px 3px;
  border-left: 1px solid #f2f4f4;
  box-shadow: inset 1px 0 #8a9699;
`;

const CloseMark = styled.button`
  width: 5px;
  height: 6px;
  border: 0;
  background: none;
  color: #111;
  font-size: 7px;
  font-weight: 700;
  line-height: 6px;
`;

const Tabs = styled.div`
  display: flex;
  margin-top: 1px;
  button {
    display: flex;
    flex: 1;
    align-items: center;
    justify-content: center;
    height: 13px;
    border: 1px solid;
    border-color: #f0f3f3 #78868a #c0cacc #f0f3f3;
    background: none;
  }
`;

const Tree = styled.div`
  flex: 1;
  border: 1px solid #8d999c;
  background: #fff;
  ul {
    display: flex;
    flex-direction: column;
    height: 78px;
    margin: 2px 0 0;
    padding: 0;
    list-style: none;
  }
`;

const TreeRow = styled.li`
  display: flex;
  flex: 1;
  align-items: center;
  gap: 2px;
  padding-left: ${(p) => [1, 2, 18][p.$level]}px;
  color: ${(p) => (p.$level === 2 ? '#e63a3a' : '#111')};
  white-space: nowrap;
  span {
    padding: 0 1px;
    background: ${(p) => (p.$active ? '#2a50b4' : 'none')};
  }
`;

const DockTools = styled.div`
  display: grid;
  grid-template-columns: repeat(6, 1fr);
  gap: 1px 0;
  padding: 2px 4px 3px;
`;

const CloseDock = styled.button`
  height: 11px;
  border: 1px solid;
  border-color: #fff #9a978a #9a978a #fff;
  background: #ece9d8;
`;

/* ---------- bottom panels ---------- */

const Bottom = styled.section`
  display: flex;
  height: 75px;
  border-top: 1px solid #e4e9ea;
`;

const Panel = styled.form`
  display: flex;
  width: 410px;
  padding-top: 1px;
  gap: 2px;
`;

const GripColumn = styled.div`
  display: flex;
  flex-direction: column;
  align-items: center;
  width: 5px;
  padding-bottom: 1px;
  & > :last-child {
    flex: 1;
  }
`;

const Details = styled.div`
  width: 206px;
`;

const Line = styled.div`
  display: flex;
  align-items: center;
  gap: 4px;
  height: 13px;
  white-space: nowrap;
`;

const Measures = styled.table`
  width: 100%;
  table-layout: fixed;
  border-collapse: collapse;
  background: #fff;
  line-height: 7px;
  th, td {
    height: 8px;
    padding: 0 1px;
    border: 1px solid #bcc3c1;
    font-weight: 400;
    text-align: right;
  }
  thead th {
    padding: 0;
    background: #e6e6da;
    text-align: center;
    white-space: nowrap;
  }
  input {
    display: block;
    width: 7px;
    height: 6px;
    appearance: none;
    border: 1px solid #888;
    background: #fff;
    position: relative;
  }
  input:checked::after {
    content: '';
    position: absolute;
    left: 2px;
    top: -1px;
    width: 2px;
    height: 4px;
    border: solid #111;
    border-width: 0 1px 1px 0;
    transform: rotate(40deg);
  }
`;

const columns = [
  ['', 9], ['', 14], ['Mesuré', 24], ['Nominal', 26], ['Iso', 13], ['Tol -', 18],
  ['Tol +', 18], ['Ec.', 19], ['Tendance', 33], ['Hors tol.', 32],
];

const measures = [
  { axis: 'V.G.', m: '-0.333', n: '0.000', ec: '-0.333', out: '-0.283' },
  { axis: 'X', m: '-40.726', n: '-40.726', ec: '0.000', out: '' },
  { axis: 'Y', m: '120.802', n: '120.802', ec: '0.000', out: '' },
  { axis: 'Z', m: '5.984', n: '6.316', ec: '-0.333', out: '-0.283' },
];

const Trend = ({ bad }) => (
  <Svg width='30' height='6' viewBox='0 0 30 6'>
    <path d='M3 1H27V5H3Z' fill='#fff' stroke='#555' />
    {bad && <path d='M3 1H15V5H3Z' fill='#d0161e' />}
    <path d='M0 0H5L3 3ZM25 0H30L27 3Z' fill='#444' />
    <path d='M15 0V6' stroke='#3a5ad0' />
  </Svg>
);

const Captions = styled.div`
  display: grid;
  grid-template-columns: 86px 1fr 27px;
  line-height: 7px;
  white-space: nowrap;
`;

const Fields = styled.div`
  display: flex;
  align-items: center;
  height: 10px;
  gap: 2px;
`;

const SideActions = styled.div`
  display: grid;
  grid-template-columns: 20px 20px;
  align-content: space-between;
  padding: 14px 0 2px;
`;

const Readout = styled.div`
  display: grid;
  flex: 1;
  grid-template-columns: 108px 1fr;
  grid-template-rows: 9px 16px 16px 16px;
  gap: 4px 11px;
  padding: 2px 10px 0 8px;
  color: #1fe03a;
`;

const Led = styled.output`
  display: flex;
  align-items: center;
  justify-content: ${(p) => (p.$value ? 'flex-end' : 'center')};
  padding-right: ${(p) => (p.$value ? 9 : 0)}px;
  border: 1px solid;
  border-color: #6d797c #eef2f2 #eef2f2 #6d797c;
  background: #000;
  font-size: 17px;
  font-weight: 300;
  font-style: ${(p) => (p.$value ? 'italic' : 'normal')};
  line-height: 14px;
`;

const LedTitle = styled(Led)`
  grid-column: 1 / -1;
  font-size: 6px;
  font-weight: 400;
  line-height: 7px;
`;

/* ---------- status and task bars ---------- */

const Status = styled.footer`
  display: flex;
  align-items: stretch;
  height: 11px;
  padding: 1px 0 0 1px;
  border-top: 1px solid #fff;
  background: #ece9d8;
  line-height: 9px;
  & > :first-child {
    flex: 1;
  }
`;

const StatusCell = styled.span`
  display: flex;
  align-items: center;
  justify-content: center;
  width: ${(p) => p.$width}px;
  border: 1px solid;
  border-color: #b5b2a3 #fff #fff #b5b2a3;
`;

const TaskBar = styled.nav`
  display: flex;
  align-items: center;
  height: 14px;
  gap: 3px;
  background: linear-gradient(#3f8af2, #245edc 20%, #2158d6 80%, #1941a5);
  color: #fff;
`;

const Start = styled.button`
  display: flex;
  align-items: center;
  gap: 2px;
  width: 46px;
  height: 14px;
  padding-left: 5px;
  border: 0;
  border-radius: 0 6px 6px 0;
  background: linear-gradient(#6cbd66, #3c9a3c 25%, #37943a 75%, #256f28);
  color: #fff;
  font-size: 9px;
  font-weight: 700;
  font-style: italic;
  line-height: 12px;
`;

const Quick = styled.div`
  display: flex;
  gap: 2px;
  width: 35px;
  margin-left: 1px;
`;

const Task = styled.button`
  display: flex;
  align-items: center;
  gap: 2px;
  width: 73px;
  height: 12px;
  padding-left: 4px;
  border: 0;
  border-radius: 2px;
  background: ${(p) => (p.$active ? '#1c48b0' : '#3c80f0')};
  color: #fff;
  white-space: nowrap;
`;

const Tray = styled.div`
  display: flex;
  align-items: center;
  gap: 1px;
  height: 14px;
  width: 46px;
  margin-left: auto;
  background: linear-gradient(#3cb4f4, #1290e8 30%, #1188e0);
  border-left: 1px solid #0c5cb8;
  time {
    margin-left: auto;
    padding-right: 3px;
  }
`;

const App = () => {
  return (
    <Page>
      <GlobalStyle />
      <Stone />
      <TopBars />

      <Workspace>
        <SideTools>
          <SideStack>
            {sideIcons.map((n, i) => (
              <Tool key={i} name={n} size={12} />
            ))}
          </SideStack>
        </SideTools>
        <LeftDock>
          <DockTitle>
            <DockStripe />
          </DockTitle>
        </LeftDock>

        <Center>
          <View>
            <Notice>
              licence de démo
              <br />
              ne peut être utilisée
              <br />
              pour la production
            </Notice>
            <Part />
            {tags.map((t) => (
              <Deviation key={t.name} tag={t} />
            ))}
            <Scale />
            <Triad />
            <Ruler>600</Ruler>
          </View>
          <ViewBar>
            <Tool name='globe' size={12} />
            <Tool name='car' size={13} wide={48} />
            <Tool name='zoomIn' size={12} wide={36} />
            <Tool name='zoomOut' size={12} wide={36} />
            <Tool name='views' size={12} wide={48} />
            <Tool name='undo' size={12} />
            <Tool name='redo' size={12} />
            <Tool name='layers' size={12} />
            <Tool name='columns' size={12} wide={48} />
          </ViewBar>
        </Center>

        <RightDock>
          <DockTitle>
            <DockStripe>Eléments</DockStripe>
            <CloseMark type='button' aria-label='Fermer le volet'>×</CloseMark>
          </DockTitle>
          <Tabs>
            {['elements', 'axes', 'cube', 'cloud', 'stylus', 'tips'].map((n) => (
              <button key={n} type='button' aria-label={n}>
                <Glyph name={n} size={12} />
              </button>
            ))}
          </Tabs>
          <Tree>
            <ul>
              <TreeRow $level={0}>
                <Glyph name='elements' size={7} />
                <span>Eléments</span>
              </TreeRow>
              <TreeRow $level={1}>
                <Glyph name='expanded' size={5} />
                <Glyph name='surfPoint' size={8} />
                <span>Point de surface</span>
              </TreeRow>
              {['SRF1', 'SRF2', 'SRF3', 'SRF4', 'SRF5', 'SRF6'].map((n) => (
                <TreeRow key={n} $level={2} $active={n === 'SRF2'}>
                  <Glyph name='surfPoint' size={7} />
                  <Glyph name='page' size={7} />
                  <span>{n}</span>
                </TreeRow>
              ))}
              <TreeRow $level={1}>
                <Glyph name='collapsed' size={5} />
                <Glyph name='rainbow' size={8} />
                <span>Surface Mapping</span>
              </TreeRow>
            </ul>
          </Tree>
          <DockTools>
            {[
              'bin', 'rename', 'props', 'edit', 'flag', 'palette',
              'curve', 'tools', 'arrows', 'frame', 'swap', 'magnify',
            ].map((n) => (
              <Tool key={n} name={n} size={12} />
            ))}
          </DockTools>
          <CloseDock type='button'>Fermer</CloseDock>
        </RightDock>
      </Workspace>

      <Bottom>
        <Panel>
          <GripColumn>
            <CloseMark type='button' aria-label='Fermer le panneau'>×</CloseMark>
            <Grip $tall />
          </GripColumn>
          <Details>
            <Line>
              <Tool name='crossed' size={8} />
              <Tool name='report' size={12} />
              <Tool name='surface' size={14} />
              <label htmlFor='ref'>Ref.</label>
              <Combo label='Ref.' value='SRF2' width={41} />
              <span>•••</span>
              <Tool name='axes' size={13} />
              <Field $width={34} $italic disabled defaultValue='REF2' aria-label='Repère' />
              <label htmlFor='fam'>Fam.</label>
              <Field id='fam' $width={26} />
            </Line>
            <Measures>
              <colgroup>
                {columns.map(([, w], i) => (
                  <col key={i} width={w} />
                ))}
              </colgroup>
              <thead>
                <tr>
                  {columns.map(([name], i) => (
                    <th key={i}>{name}</th>
                  ))}
                </tr>
              </thead>
              <tbody>
                {measures.map((r) => (
                  <tr key={r.axis}>
                    <td>
                      <input type='checkbox' defaultChecked aria-label={r.axis} />
                    </td>
                    <td>{r.axis}</td>
                    <td>{r.m}</td>
                    <td>{r.n}</td>
                    <td />
                    <td>-0.060</td>
                    <td>0.060</td>
                    <td>{r.ec}</td>
                    <td>
                      <Trend bad={r.out !== ''} />
                    </td>
                    <td>{r.out}</td>
                  </tr>
                ))}
              </tbody>
            </Measures>
            <Captions>
              <span>Vecteur normal</span>
              <span>Entité CAO de réf.</span>
              <label htmlFor='epmat'>Ep. Mat.</label>
            </Captions>
            <Fields>
              <Field $width={27} $small disabled defaultValue='0.000000' aria-label='Normale X' />
              <Field $width={27} $small disabled defaultValue='-0.000000' aria-label='Normale Y' />
              <Field $width={27} $small disabled defaultValue='1.000000' aria-label='Normale Z' />
              <Combo label='Entité CAO de réf.' value='A: FACE-192 (-0.333)' width={66} />
              <Tool name='helpRef' size={14} />
              <Field id='epmat' $width={27} />
            </Fields>
          </Details>
          <SideActions>
            {['bin', 'sheet', 'magnify', 'flag', 'target', 'pen', 'leftArrow', 'rightArrow'].map((n) => (
              <Tool key={n} name={n} size={12} />
            ))}
          </SideActions>
        </Panel>
        <GripColumn>
          <CloseMark type='button' aria-label='Fermer la position'>×</CloseMark>
          <Grip $tall />
        </GripColumn>
        <Readout>
          <LedTitle>Position</LedTitle>
          <Led>X</Led>
          <Led $value>-0.235</Led>
          <Led>Y</Led>
          <Led $value>-0.975</Led>
          <Led>Z</Led>
          <Led $value>0.300</Led>
        </Readout>
      </Bottom>

      <Status>
        <span>Metrolog XG</span>
        <StatusCell $width={47}>metropass</StatusCell>
        <StatusCell $width={14} />
        <StatusCell $width={13} />
        <StatusCell $width={13} />
        <StatusCell $width={14}>
          <Glyph name='joystick' size={8} wide={32} />
        </StatusCell>
        <StatusCell $width={13} />
        <StatusCell $width={13} />
        <StatusCell $width={19}>MM</StatusCell>
        <StatusCell $width={21}>DEGD</StatusCell>
        {['wave', 'grid', 'chart', 'book'].map((n) => (
          <StatusCell key={n} $width={14}>
            <Glyph name={n} size={8} />
          </StatusCell>
        ))}
        <StatusCell $width={10} />
      </Status>

      <TaskBar>
        <Start type='button'>
          <Glyph name='windows' size={9} />
          start
        </Start>
        <Quick>
          {['desktop', 'ie', 'player'].map((n) => (
            <Tool key={n} name={n} size={9} />
          ))}
        </Quick>
        <Task type='button' $active>
          <Glyph name='app' size={8} />
          Metrolog XG : - Trav...
        </Task>
        <Task type='button'>
          <Glyph name='folder' size={8} />
          Casting_émilie
        </Task>
        <Tray>
          {['chevron', 'network', 'shield'].map((n) => (
            <Glyph key={n} name={n} size={8} />
          ))}
          <time>14:11</time>
        </Tray>
      </TaskBar>
    </Page>
  );
};

export default App;
